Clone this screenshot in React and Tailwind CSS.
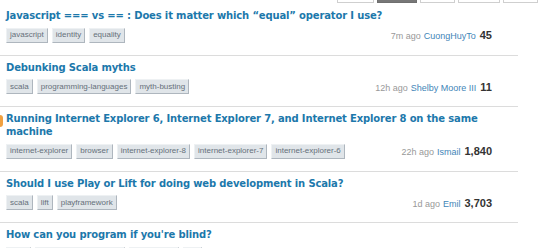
import React from "react";

const questions = [
  {
    title: "Javascript === vs == : Does it matter which “equal” operator I use?",
    tags: ["javascript", "identity", "equality"],
    ago: "7m ago",
    user: "CuongHuyTo",
    score: "45",
  },
  {
    title: "Debunking Scala myths",
    tags: ["scala", "programming-languages", "myth-busting"],
    ago: "12h ago",
    user: "Shelby Moore III",
    score: "11",
  },
  {
    title:
      "Running Internet Explorer 6, Internet Explorer 7, and Internet Explorer 8 on the same machine",
    tags: [
      "internet-explorer",
      "browser",
      "internet-explorer-8",
      "internet-explorer-7",
      "internet-explorer-6",
    ],
    ago: "22h ago",
    user: "Ismail",
    score: "1,840",
    hot: true,
  },
  {
    title: "Should I use Play or Lift for doing web development in Scala?",
    tags: ["scala", "lift", "playframework"],
    ago: "1d ago",
    user: "Emil",
    score: "3,703",
  },
  {
    title: "How can you program if you're blind?",
    tags: ["blind", "programming-practices", "accessibility", "ide"],
    ago: "2d ago",
    user: "Nocturne",
    score: "33,9k",
  },
];

const tabs = [
  { w: "w-[37px]", active: false },
  { w: "w-[40px]", active: true },
  { w: "w-[35px]", active: false },
  { w: "w-[42px]", active: false },
  { w: "w-[35px]", active: false },
];

const Tag = ({ name }) => (
  <span className="inline-flex items-center h-[15px] px-[3px] bg-[#e0e5e9] border border-[#eef1f3] border-r-[#aeb6be] border-b-[#aeb6be] text-[8px] leading-none text-[#66707a] font-['Liberation_Sans',Arial,sans-serif]">
    {name}
  </span>
);

const App = () => {
  return (
    <div className="w-[540px] h-[248px] overflow-hidden bg-white">
      {/* tabs bar */}
      <div className="flex gap-[3px] pl-[337px] h-[3px]">
        {tabs.map((t, i) => (
          <div
            key={i}
            className={`${t.w} h-[3px] border-x border-b ${
              t.active
                ? "bg-[#777] border-[#6f6f6f]"
                : "bg-white border-[#cfcfcf]"
            }`}
          ></div>
        ))}
      </div>

      <div className="w-[518px]">
        {questions.map((q, i) => (
          <div
            key={i}
            className={`relative pl-[6px] pr-[26px] border-b border-[#dcdcdc] ${
              i === 0 ? "pt-[6px] pb-[11px]" : "pt-[5px] pb-[11px]"
            }`}
          >
            {q.hot && (
              <span className="absolute left-0 top-[8px] w-[3px] h-[12px] bg-[#f0a040] rounded-r"></span>
            )}
            <h3 className="text-[10px] leading-[13px] font-bold tracking-[-0.15px] text-[#1c78ab] font-['DejaVu_Sans',Verdana,sans-serif]">
              {q.title}
            </h3>
            <div className="flex items-center justify-between mt-[5px]">
              <div className="flex gap-[4px]">
                {q.tags.map((t) => (
                  <Tag key={t} name={t} />
                ))}
              </div>
              <div className="flex items-baseline gap-[3px] font-['Liberation_Sans',Arial,sans-serif]">
                <span className="text-[9px] text-[#999]">{q.ago}</span>
                <span className="text-[9px] text-[#3f86b8]">{q.user}</span>
                <span className="text-[11px] font-bold text-[#333] ml-[1px]">
                  {q.score}
                </span>
              </div>
            </div>
          </div>
        ))}
      </div>
    </div>
  );
};

export default App;
